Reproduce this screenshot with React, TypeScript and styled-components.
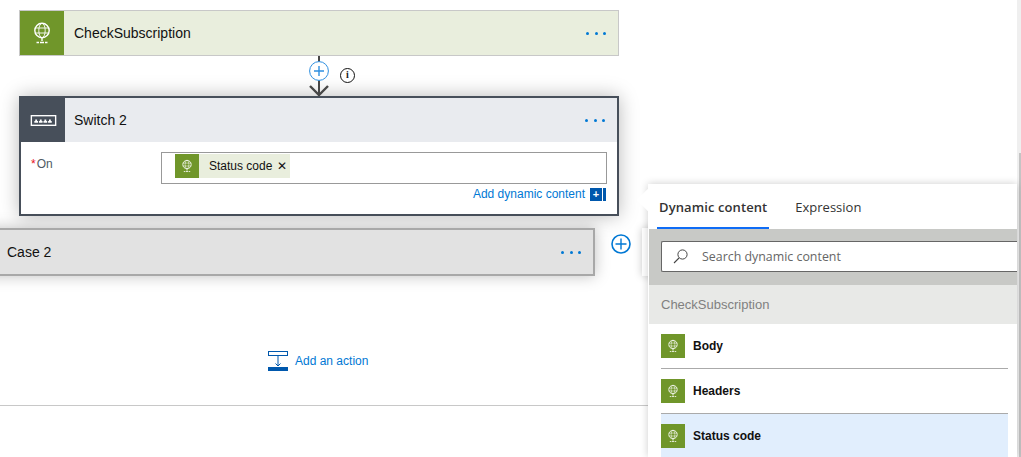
import React from "react";
import styled, { createGlobalStyle } from "styled-components";

const Global = createGlobalStyle`
  html, body { margin: 0; padding: 0; background: #fff; }
  body { font-family: "Liberation Sans", Arial, sans-serif; color: #1a1a1a; }
`;

const Page = styled.div`
  position: relative;
  width: 1021px;
  height: 457px;
  overflow: hidden;
  background: #fff;
`;

const Canvas = styled.div`
  display: flex;
  flex-direction: column;
  width: 600px;
  padding: 10px 0 0 19px;
`;

const Card = styled.div<{ $border: string; $width: number }>`
  display: flex;
  flex-direction: column;
  box-sizing: border-box;
  width: 600px;
  border: ${(p) => p.$width}px solid ${(p) => p.$border};
  background: #fff;
  ${(p) => (p.$width > 1 ? "box-shadow: 0 0 18px rgba(0,0,0,.28);" : "")}
`;

const CardHeader = styled.div<{ $bg: string; $height: number }>`
  display: flex;
  align-items: center;
  height: ${(p) => p.$height}px;
  background: ${(p) => p.$bg};
`;

const IconTile = styled.div<{ $bg: string; $size: number }>`
  display: flex;
  flex: none;
  align-items: center;
  justify-content: center;
  width: ${(p) => p.$size}px;
  height: 100%;
  background: ${(p) => p.$bg};
`;

const CardTitle = styled.span<{ $indent: number }>`
  flex: 1;
  margin-left: ${(p) => p.$indent}px;
  font-size: 14px;
  color: #111;
`;

const Dots = styled.div`
  display: flex;
  gap: 5.5px;
  margin-right: 12px;
  i {
    width: 3px;
    height: 3px;
    border-radius: 50%;
    background: #0078d4;
  }
`;

const Connector = styled.div`
  position: relative;
  display: flex;
  flex-direction: column;
  align-items: center;
  height: 40px;
  width: 600px;
`;

const ConnectorArt = styled.svg`
  display: block;
`;

const InfoBadge = styled.div`
  position: absolute;
  left: 321px;
  top: 12px;
  width: 15px;
  height: 15px;
  box-sizing: border-box;
  border: 1.4px solid #111;
  border-radius: 50%;
  background: #fff;
  font: 700 10px/12.5px "Liberation Serif", serif;
  text-align: center;
  color: #222;
`;

const SwitchBody = styled.div`
  display: flex;
  flex-direction: column;
  height: 72px;
  padding: 10px 10px 0 10px;
  box-sizing: border-box;
`;

const FieldRow = styled.div`
  display: flex;
`;

const FieldLabel = styled.div`
  width: 130px;
  padding-top: 5px;
  font-size: 12px;
  color: #505a64;
  b {
    color: #e81123;
    font-weight: 400;
    margin-right: 1px;
  }
`;

const TokenInput = styled.div`
  box-sizing: border-box;
  width: 446px;
  height: 32px;
  padding: 1px 0 0 13px;
  border: 1px solid #999;
  background: #fff;
`;

const Token = styled.div`
  display: inline-flex;
  align-items: center;
  height: 24px;
  background: #e9eedd;
  font-size: 12px;
  color: #111;
`;

const TokenText = styled.span`
  margin-left: 10px;
`;

const TokenClose = styled.span`
  margin: 0 3px 0 5px;
  font-size: 12px;
`;

const DynamicRow = styled.div`
  display: flex;
  align-items: center;
  justify-content: flex-end;
  height: 20px;
  margin-right: 1px;
  gap: 5px;
  font-size: 12px;
  color: #0078d4;
`;

const AddBox = styled.div`
  display: flex;
  gap: 1px;
  height: 13px;
`;

const AddPlus = styled.div`
  width: 12px;
  height: 13px;
  background: #0058ad;
  color: #fff;
  font: 700 11px/12px "Liberation Sans", sans-serif;
  text-align: center;
`;

const AddBar = styled.div`
  width: 3px;
  height: 13px;
  background: #0058ad;
`;

const CaseRow = styled.div`
  display: flex;
  align-items: flex-start;
  width: 700px;
  margin: 12px 0 0 -59px;
`;

const CaseCard = styled.div`
  display: flex;
  align-items: center;
  box-sizing: border-box;
  flex: none;
  width: 635px;
  height: 48px;
  padding-left: 45px;
  background: #e2e2e2;
  border: 2px solid #a8a8a8;
  box-shadow: 0 0 14px rgba(0, 0, 0, 0.25);
`;

const CaseTitle = styled.span`
  flex: 1;
  font-size: 14px;
  color: #111;
`;

const CircleAdd = styled.svg`
  flex: none;
  margin: 6px 11px 0 16px;
`;

const NextCard = styled.div`
  flex: none;
  width: 20px;
  height: 48px;
  background: #fff;
  box-shadow: 0 0 8px rgba(0, 0, 0, 0.22);
`;

const AddAction = styled.div`
  display: flex;
  align-items: center;
  gap: 7px;
  margin: 75px 0 0 249px;
  font-size: 12px;
  color: #0078d4;
`;

const Rule = styled.div`
  width: 648px;
  height: 1px;
  margin: 34px 0 0 -19px;
  background: #c8c8c8;
`;

const Panel = styled.div`
  position: absolute;
  left: 648px;
  top: 184px;
  width: 369px;
  height: 273px;
  background: #fff;
  box-shadow: 0 0 8px rgba(0, 0, 0, 0.2);
`;

const PanelNotch = styled.div`
  position: absolute;
  left: -8px;
  top: 8px;
  width: 16px;
  height: 16px;
  background: #fff;
  transform: rotate(45deg);
`;

const Tabs = styled.div`
  position: relative;
  display: flex;
  height: 45px;
  padding-left: 9px;
  gap: 24px;
`;

const Tab = styled.div<{ $active?: boolean }>`
  box-sizing: border-box;
  height: 45px;
  padding: 14px 2px 0;
  font-family: "Open Sans", sans-serif;
  font-size: 13px;
  font-weight: ${(p) => (p.$active ? 600 : 400)};
  letter-spacing: ${(p) => (p.$active ? "0.1px" : "0")};
  color: #333;
  border-bottom: 2px solid ${(p) => (p.$active ? "#0f6cf5" : "transparent")};
`;

const SearchBand = styled.div`
  box-sizing: border-box;
  height: 56px;
  margin-left: 1px;
  padding: 12px 0 0 12px;
  background: #c8c9c6;
`;

const SearchBox = styled.div`
  box-sizing: border-box;
  display: flex;
  align-items: center;
  height: 31px;
  padding: 0 0 1px 11px;
  gap: 13px;
  background: #fff;
  border: 1px solid #666;
  border-right: none;
  border-radius: 2px 0 0 2px;
  font-family: "Open Sans", sans-serif;
  font-size: 12.4px;
  color: #666;
`;

const GroupHeader = styled.div`
  box-sizing: border-box;
  height: 39px;
  margin-left: 1px;
  padding: 12px 0 0 12px;
  background: #e8e9e7;
  font-size: 13px;
  color: #808080;
`;

const List = styled.div`
  display: flex;
  flex-direction: column;
  width: 347px;
  margin-left: 13px;
`;

const Row = styled.div<{ $selected?: boolean; $height: number; $top: number }>`
  box-sizing: border-box;
  display: flex;
  align-items: flex-start;
  flex: none;
  gap: 8px;
  height: ${(p) => p.$height}px;
  padding-top: ${(p) => p.$top}px;
  background: ${(p) => (p.$selected ? "#e1eefd" : "#fff")};
  border-bottom: ${(p) => (p.$selected ? "none" : "1px solid #aaa")};
  font-size: 12px;
  font-weight: 700;
  color: #111;
`;

const RowText = styled.span`
  line-height: 24px;
`;

const SmallTile = styled.div`
  display: flex;
  flex: none;
  align-items: center;
  justify-content: center;
  width: 24px;
  height: 24px;
  background: #70962a;
`;

const ScrollTrack = styled.div`
  position: absolute;
  right: 0;
  top: 0;
  width: 4px;
  height: 457px;
  background: #efefef;
`;

const ScrollThumb = styled.div`
  position: absolute;
  right: 0;
  top: 153px;
  width: 2px;
  height: 304px;
  background: #c4c4c4;
`;

const Globe = ({ size }: { size: number }) => (
  <svg width={size} height={size} viewBox="0 0 24 24" fill="none" stroke="#fff">
    <circle cx="12" cy="9.5" r="7.2" strokeWidth="1.4" />
    <ellipse cx="12" cy="9.5" rx="3.2" ry="7.2" strokeWidth="0.9" />
    <path d="M5 7h14M5 12h14" strokeWidth="0.9" />
    <path d="M12 17v3" strokeWidth="1.4" />
    <path d="M6.5 21.5h2.5M10 21.5h4M15 21.5h2.5" strokeWidth="1.4" />
  </svg>
);

const SwitchGlyph = () => (
  <svg width="27" height="11" viewBox="0 0 28 12">
    <rect x="0.75" y="0.75" width="26.5" height="10.5" fill="none" stroke="#fff" strokeWidth="1.5" />
    {[4, 9, 14, 19].map((x) => (
      <path key={x} d={`M${x} 8.5v-2h1v-1.5h2v1.5h1v2z`} fill="#fff" />
    ))}
  </svg>
);

const Plus = ({ size }: { size: number }) => (
  <CircleAdd width={size} height={size} viewBox="0 0 20 20">
    <circle cx="10" cy="10" r="9" fill="#fff" stroke="#0078d4" strokeWidth="1.6" />
    <path d="M10 4.5v11M4.5 10h11" stroke="#0078d4" strokeWidth="1.4" />
  </CircleAdd>
);

const ThreeDots = () => (
  <Dots>
    <i />
    <i />
    <i />
  </Dots>
);

export default function App() {
  return (
    <Page>
      <Global />
      <Canvas>
        <Card $border="#c8c8c8" $width={1}>
          <CardHeader $bg="#e9eedd" $height={44}>
            <IconTile $bg="#70962a" $size={44}>
              <Globe size={24} />
            </IconTile>
            <CardTitle $indent={10}>CheckSubscription</CardTitle>
            <ThreeDots />
          </CardHeader>
        </Card>

        <Connector>
          <ConnectorArt width="24" height="40" viewBox="0 0 24 40">
            <path d="M12 0v40" stroke="#474747" strokeWidth="2" />
            <path d="M3 30l9 9 9-9" fill="none" stroke="#474747" strokeWidth="2.4" />
            <circle cx="12" cy="15" r="9.4" fill="#fff" stroke="#2e8fe0" strokeWidth="1" />
            <path d="M12 10v10M7 15h10" stroke="#2e8fe0" strokeWidth="1.4" />
          </ConnectorArt>
          <InfoBadge>i</InfoBadge>
        </Connector>

        <Card $border="#474f5a" $width={2}>
          <CardHeader $bg="#e9ebef" $height={44}>
            <IconTile $bg="#474f5a" $size={44}>
              <SwitchGlyph />
            </IconTile>
            <CardTitle $indent={9}>Switch 2</CardTitle>
            <ThreeDots />
          </CardHeader>
          <SwitchBody>
            <FieldRow>
              <FieldLabel>
                <b>*</b>On
              </FieldLabel>
              <TokenInput>
                <Token>
                  <SmallTile>
                    <Globe size={14} />
                  </SmallTile>
                  <TokenText>Status code</TokenText>
                  <TokenClose>✕</TokenClose>
                </Token>
              </TokenInput>
            </FieldRow>
            <DynamicRow>
              Add dynamic content
              <AddBox>
                <AddPlus>+</AddPlus>
                <AddBar />
              </AddBox>
            </DynamicRow>
          </SwitchBody>
        </Card>

        <CaseRow>
          <CaseCard>
            <CaseTitle>Case 2</CaseTitle>
            <ThreeDots />
          </CaseCard>
          <Plus size={20} />
          <NextCard />
        </CaseRow>

        <AddAction>
          <svg width="20" height="20" viewBox="0 0 20 20">
            <rect x="0.5" y="0.5" width="19" height="4" fill="none" stroke="#0058ad" />
            <path d="M10 5v10M7.5 12.5L10 15l2.5-2.5" fill="none" stroke="#0058ad" strokeWidth="1" />
            <rect x="0" y="16" width="20" height="4" fill="#0058ad" />
          </svg>
          Add an action
        </AddAction>

        <Rule />
      </Canvas>

      <ScrollTrack />
      <ScrollThumb />

      <Panel>
        <PanelNotch />
        <Tabs>
          <Tab $active>Dynamic content</Tab>
          <Tab>Expression</Tab>
        </Tabs>
        <SearchBand>
          <SearchBox>
            <svg width="16" height="16" viewBox="0 0 16 16" fill="none" stroke="#444">
              <circle cx="9.5" cy="6.5" r="4.6" strokeWidth="1" />
              <path d="M6 10L1 15" strokeWidth="1.1" />
            </svg>
            Search dynamic content
          </SearchBox>
        </SearchBand>
        <GroupHeader>CheckSubscription</GroupHeader>
        <List>
          <Row $height={45} $top={10}>
            <SmallTile>
              <Globe size={14} />
            </SmallTile>
            <RowText>Body</RowText>
          </Row>
          <Row $height={45} $top={10}>
            <SmallTile>
              <Globe size={14} />
            </SmallTile>
            <RowText>Headers</RowText>
          </Row>
          <Row $height={45} $top={10} $selected>
            <SmallTile>
              <Globe size={14} />
            </SmallTile>
            <RowText>Status code</RowText>
          </Row>
        </List>
      </Panel>
    </Page>
  );
}
